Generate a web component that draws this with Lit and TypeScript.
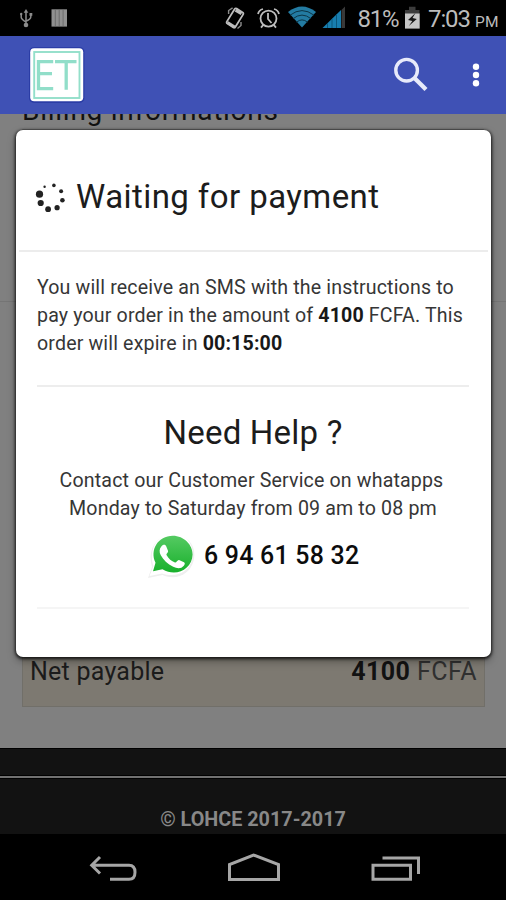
import { LitElement, html, svg, css } from "lit";
import { customElement } from "lit/decorators.js";

@customElement("status-bar")
class StatusBar extends LitElement {
  static styles = css`
    :host { display: block; height: 36px; background: #000; position: relative; z-index: 1; }
    svg { display: block; width: 506px; height: 36px; font-family: Roboto, sans-serif; }
  `;
  render() {
    return html`<svg viewBox="0 0 506 36">
      <g stroke="#8c8c8c" stroke-width="1.5" fill="none">
        <path d="M26 12V25M21.2 14v3.2q0 2 4.8 4.8M30.8 14v3q0 2-4.8 4.2"/>
        <path d="M26 9l2.3 3.8h-4.6z" fill="#8c8c8c" stroke="none"/>
        <circle cx="26" cy="25" r="2.3" fill="#8c8c8c" stroke="none"/>
        <circle cx="21.2" cy="14" r="1.2" fill="#8c8c8c" stroke="none"/>
        <rect x="29.5" y="13" width="2.8" height="2.8" fill="#8c8c8c" stroke="none"/>
      </g>
      <rect x="51.5" y="9.3" width="15.5" height="17.3" fill="#909090"/>
      <path d="M55.3 10v16M59.2 10v16M63.1 10v16" stroke="#6c6c6c" stroke-width="1"/>
      <g fill="none" stroke="#bdbdbd" stroke-width="1.8">
        <rect x="-5" y="-8.8" width="10" height="17.6" rx="1.4" transform="translate(235 18) rotate(32)"/>
        <path d="M227.5 22.5l7.5 4.7M235.5 10.2l6 3.6" stroke-width="3"/>
        <path d="M228.6 14v-3.5l4-2.7M241 22v3.5l-3.5 3" stroke="#8d8d8d" stroke-width="1.4"/>
        <circle cx="268.5" cy="18.6" r="8"/>
        <path d="M268 13v6l3.5 4M258 14q1-4 5-5M279 14q-1-4-5-5M263.5 24.7l-2.5 3M273.5 24.7l2.5 3"/>
      </g>
      <path d="M288 12q14-11 28 0L302 27.5z" fill="#237ba2"/>
      <path d="M290 15.2q12-9.2 24 0M293 18.7q9-7.2 18 0M296.5 22.2q5.5-4.6 11 0" stroke="#0b3546" stroke-width="1" fill="none"/>
      <path d="M322.5 28L341 10V28z" fill="#187eaf"/>
      <path d="M327.5 23v5M332 19v9M336.5 14.5v13.5" stroke="#0b577b"/>
      <path d="M341.5 10L345 6.5V28h-3.5z" fill="#393939"/>
      <text x="357.5" y="27" font-size="24" fill="#bcbcbc" textLength="42">81%</text>
      <path d="M405 10h4V6.8h6.5V10h4v4H405z" fill="#3c3c3c"/>
      <path d="M405 13.5h14.7V28.6H405z" fill="#c6c6c6"/>
      <path d="M415.5 13l-7.5 7 4.3 1-3.5 5 8-7-4.3-1z" fill="#171717"/>
      <text x="428" y="27" font-size="24" fill="#bcbcbc" textLength="43">7:03</text>
      <text x="475" y="27" font-size="15.5" fill="#bcbcbc" textLength="23.5">PM</text>
    </svg>`;
  }
}

@customElement("app-bar")
class AppBar extends LitElement {
  static styles = css`
    :host { display: flex; align-items: flex-start; height: 78px; flex: none; background: #3f51b5; box-sizing: border-box; padding: 11px 24px 0 29px; position: relative; z-index: 1; }
    svg { display: block; }
    .logo { margin-right: auto; }
    .search { margin: 9px 41px 0 0; }
    .more { margin-top: 15px; }
  `;
  render() {
    return html`
      <svg class="logo" width="56" height="57" viewBox="0 0 56 57">
        <rect x="0" y="0" width="55.5" height="56" rx="5" fill="#2b3da6"/>
        <rect x="1.2" y="1.3" width="53" height="53" rx="4" fill="#fff"/>
        <rect x="5.2" y="5" width="45.3" height="46" fill="none" stroke="#93dfca" stroke-width="1.9"/>
        <path d="M24.2 14.7H9.5v27h14.7M9.5 26.7h13.5M26 14.7h21.5M37.2 14.7v28" fill="none" stroke="#91dec9" stroke-width="3.3"/>
      </svg>
      <svg class="search" width="36" height="36" viewBox="0 0 36 36" fill="none" stroke="#e7eafa">
        <circle cx="13.6" cy="14.2" r="10.8" stroke-width="3.4"/>
        <path d="M21.4 21.9L33 33.5" stroke-width="4.3"/>
      </svg>
      <svg class="more" width="12" height="28" viewBox="0 0 12 28" fill="#fff">
        <circle cx="6" cy="4.7" r="3.2"/><circle cx="6" cy="13" r="3.2"/><circle cx="6" cy="21.3" r="3.2"/>
      </svg>`;
  }
}

const dot = (x: number, y: number, r: number) => svg`<circle cx=${x} cy=${y} r=${r} fill="#222"/>`;
const spinnerDots = [[8.5, 3.5, 1.2], [17.8, 2.2, 1.8], [25, 8, 2], [26.3, 17, 2.3], [21, 24.5, 2.6], [12, 26, 2.9], [4.6, 19.8, 3.1], [3.4, 11, 3.6]];

@customElement("payment-dialog")
class PaymentDialog extends LitElement {
  static styles = css`
    :host { display: block; box-sizing: border-box; background: #fff; border-radius: 7px; color: #1c1c1c;
      box-shadow: 0 1px 3px 1px rgba(0,0,0,.75), 0 4px 9px rgba(0,0,0,.35); }
    header { display: flex; align-items: center; height: 120px; margin: 0 3px; padding-left: 16px; border-bottom: 2px solid #ececec; box-sizing: content-box; }
    h2 { margin: 13px 0 0 9px; font-size: 33px; line-height: 40px; font-weight: 400; letter-spacing: .42px; white-space: nowrap; }
    .spin { margin-top: 17px; }
    svg { display: block; flex: none; }
    main { padding: 22px 22px 0 21px; }
    p { margin: 0; font-size: 19.6px; line-height: 28px; letter-spacing: .15px; white-space: nowrap; color: #363636; }
    b { color: #181818; }
    hr { border: 0; height: 2px; margin: 0; background: #ededed; }
    .first { margin-top: 27px; }
    .last { margin-top: 28px; background: #f5f5f5; }
    .help { text-align: center; padding-top: 26px; }
    .help p { margin-right: 3px; }
    .help p + p { margin-right: 0; }
    h3 { margin: 0 0 14px; font-size: 33px; line-height: 40px; font-weight: 400; letter-spacing: .2px; }
    .phone { display: flex; align-items: center; padding-left: 111px; height: 46px; margin-top: 10px; }
    .num { margin: -1px 0 0 8px; font-size: 24.9px; font-weight: 500; letter-spacing: .25px; white-space: nowrap; color: #0c0c0c; }
  `;
  render() {
    return html`
      <header>
        <svg class="spin" width="32" height="32" viewBox="0 0 32 32"><g transform="translate(1.1 .2)">
          ${spinnerDots.map(([x, y, r]) => dot(x, y, r))}
        </g></svg>
        <h2>Waiting for payment</h2>
      </header>
      <main>
        <p>You will receive an SMS with the instructions to</p>
        <p>pay your order in the amount of <b>4100</b> FCFA. This</p>
        <p>order will expire in <b>00:15:00</b></p>
        <hr class="first">
        <section class="help">
          <h3>Need Help ?</h3>
          <p>Contact our Customer Service on whatapps</p>
          <p>Monday to Saturday from 09 am to 08 pm</p>
          <div class="phone">
            <svg width="48" height="46" viewBox="0 0 48 46">
              <defs><linearGradient id="g" x1="0" y1="0" x2="0" y2="1"><stop offset="0" stop-color="#55ca62"/><stop offset="1" stop-color="#18b02c"/></linearGradient></defs>
              <path d="M0 45l4-11C-1 17 8 2 25 2s24 13 20.500 26-17 20-31 14z" fill="#efefef"/>
              <path d="M1.500 43l4-10C0 17 9 1 25 1S47 15 44 27 28 45 14 40.500z" fill="#fff"/>
              <path d="M5 38.300l2.500-8.500C1.500 17 10 2.800 24.800 2.800 36 2.800 44.700 12 44.600 21.500 44 36.500 28 44.500 14.500 36.300z" fill="url(#g)"/>
              <path d="M13.500 13.200c2.200-2.300 4-1.700 4.800.2l1.700 4.300c.6 1.500-2 3.200-1.500 4.200 2 3.600 5 6.200 8.500 7.600 1.200.5 2.700-3 4-2.500l5 2.300c1.300.7.9 2-.2 3.400-2.600 3.200-6.500 3-10.600 1.100-5.600-2.600-10-7-12.400-11.500-1.700-3-1.600-6.600.7-9.100z" fill="#fff"/>
            </svg>
            <span class="num">6 94 61 58 32</span>
          </div>
        </section>
        <hr class="last">
      </main>`;
  }
}

@customElement("nav-bar")
class NavBar extends LitElement {
  static styles = css`
    :host { display: block; height: 66px; background: #000; }
    svg { display: block; }
  `;
  render() {
    return html`<svg width="506" height="66" viewBox="0 0 506 66" fill="none" stroke="#a6a6a6" stroke-width="3">
      <path d="M91 31.200h38q6 0 6 7t-6 7h-19M100 23l-8.300 8.200L100 39.500"/>
      <path d="M229.500 45.500V30.500L253.500 21l25 9.500v15z"/>
      <path d="M373 31.200h37.500v14H373zM382.500 24h36v16"/>
    </svg>`;
  }
}

@customElement("app-root")
class AppRoot extends LitElement {
  static styles = css`
    :host { display: flex; flex-direction: column; position: relative; width: 506px; height: 900px; overflow: hidden; background: #808080; font-family: Roboto, sans-serif; }
    .page { display: flex; flex-direction: column; height: 653px; flex: none; box-sizing: border-box; margin-top: -19px; }
    .title { height: 34px; flex: none; padding-left: 22px; font-size: 28px; line-height: 32px; color: #111; white-space: nowrap; letter-spacing: .74px; }
    .line { height: 172px; flex: none; border-bottom: 1px solid #757575; }
    .line::before { content: ""; display: block; margin: 0 22px; border-top: 2px solid #686868; border-radius: 3px; }
    .rest { flex: 1; display: flex; align-items: flex-end; padding: 0 21px 41px 22px; }
    .total { flex: 1; box-sizing: border-box; height: 100px; display: flex; align-items: flex-end; justify-content: space-between; padding: 0 7px 18px 7px; border: 1px solid #716f69; background: #7d7971; font-size: 25px; line-height: 32px; color: #1b1b1b; }
    .net { letter-spacing: .25px; }
    .amt { color: #303030; letter-spacing: .45px; }
    .total b { color: #121212; }
    footer { height: 86px; flex: none; background: #121212; border-top: 1px solid #000; box-sizing: border-box; text-align: center; }
    .rule { height: 2px; margin-top: 26px; background: #707070; border: solid #000; border-width: 1px 0; }
    .copy { padding-top: 27px; font-size: 19.800px; line-height: 28px; font-weight: 700; color: #888; white-space: nowrap; }
    payment-dialog { position: absolute; z-index: 2; left: 16px; top: 130px; width: 475px; height: 527px; }
  `;
  render() {
    return html`
      <status-bar></status-bar>
      <app-bar></app-bar>
      <div class="page">
        <div class="title">Billing informations</div>
        <div class="line"></div>
        <div class="rest">
          <div class="total"><span class="net">Net payable</span><span class="amt"><b>4100</b> FCFA</span></div>
        </div>
      </div>
      <footer><div class="rule"></div><div class="copy">© LOHCE 2017-2017</div></footer>
      <nav-bar></nav-bar>
      <payment-dialog></payment-dialog>`;
  }
}
